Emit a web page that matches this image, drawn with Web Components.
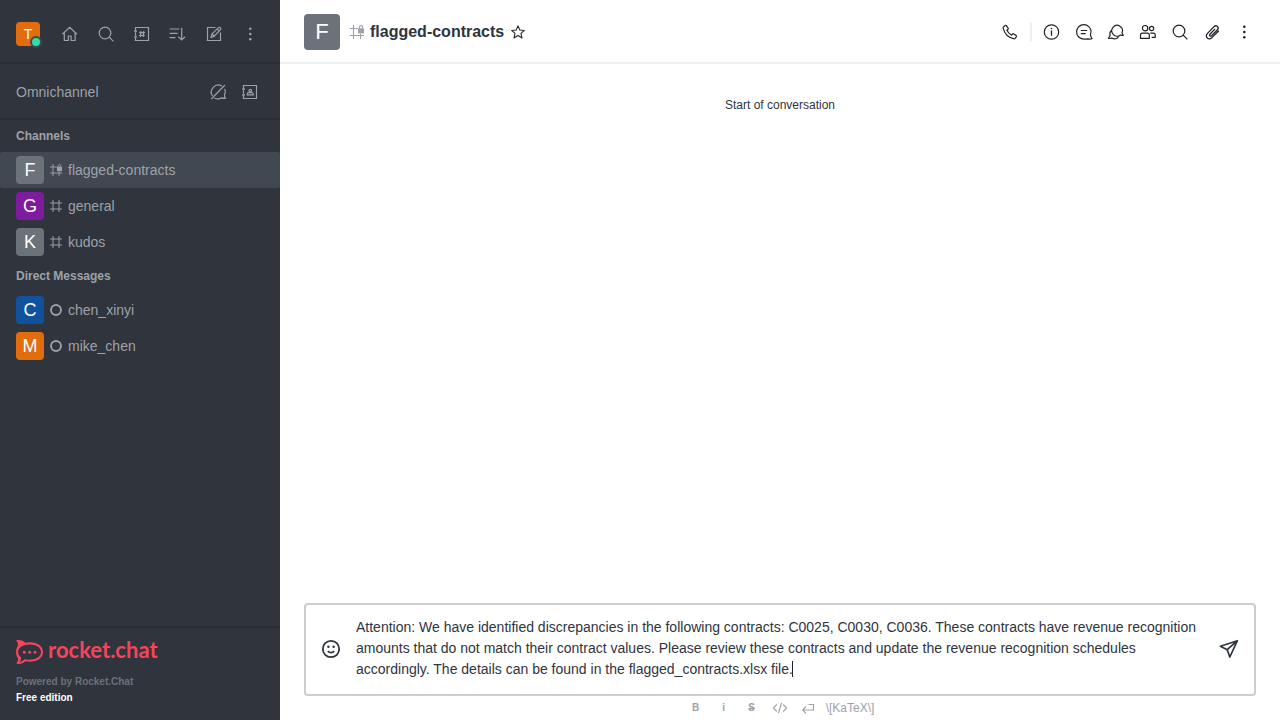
<!DOCTYPE html>
<html lang="en">
<head>
<meta charset="utf-8">
<meta name="viewport" content="width=device-width, initial-scale=1">
<title>flagged-contracts</title>
<style>
  html, body { margin: 0; height: 100%; }
  body { font-family: "Liberation Sans", Arial, sans-serif; color: #2f343d; background: #fff; }
</style>
</head>
<body>
<chat-app></chat-app>
<script>
const ICONS = {
  home: '<path d="M2.400 10.300 9.700 3.400l7.300 6.900M4.300 9v7.500h4V12h2.800v4.500h4V9"/>',
  search: '<circle cx="9" cy="9" r="5.8"/><path d="m13.2 13.2 4.2 4.2"/>',
  directory: '<path d="M3.500 6.500v-3h13v13h-13v-3M3.500 8.300v3.400M2 7.200h3M2 12.800h3M7.200 8.700h5.800M7 11.500h5.800M8.900 7l-.5 6M11.700 7l-.5 6"/>',
  contacts: '<path d="M3.500 6.500v-3h13v13h-13v-3M3.500 8.300v3.400M2 7.200h3M2 12.800h3M7.300 12.800h6v-.6c0-.9-.8-1.5-1.700-1.500H9c-.9 0-1.700.6-1.700 1.500z"/><circle cx="10.300" cy="8.600" r="1.300"/>',
  sort: '<path d="M1.600 5h9.800M1.600 9.300h8M1.600 13.600h5.800M13.700 3.700v12M10.400 12.700l3.300 3.200 3.300-3.200"/>',
  edit: '<path d="M11.500 3.500h-8v13h13v-8"/><path d="m7 13.300.9-3.300 6.500-6.400c1.200-1 3.200.8 2.100 2.100L10 12.400zM8.200 10l1.800 2.100M13.200 4.900l2 2"/>',
  kebab: '<g fill="currentColor" stroke="none"><circle cx="10.300" cy="4.800" r="1.300"/><circle cx="10.300" cy="10" r="1.300"/><circle cx="10.300" cy="15.200" r="1.300"/></g>',
  omni: '<path d="M13.900 4.100A7 7 0 0 0 4.500 14M6.400 15.900c2.500 1.400 5 1.200 7.400 0 1.200.6 2.500.7 3.700.3-.9-.9-1.200-2-1-3.300 1.100-2.200 1-4.300.2-6.200M3.300 17 16.900 3"/>',
  phone: '<path d="M3.600 4.700 5.200 3.600c.6-.4 1-.2 1.400.3l1.500 2.200c.4.6.3 1-.2 1.400l-1 .8c.9 2 2.600 3.700 4.700 4.800l.9-1c.4-.5.9-.6 1.400-.2l2.200 1.600c.5.4.5.8.2 1.300l-1.100 1.500c-.4.5-1 .6-1.700.4C8.400 15.500 4.500 11.500 3.200 6.400c-.2-.7-.1-1.300.4-1.700z"/>',
  info: '<circle cx="9.500" cy="10" r="7.200"/><path d="M9.500 8.400v5.400" stroke-width="1.300"/><circle cx="9.500" cy="6.500" r=".8" fill="currentColor" stroke="none"/>',
  thread: '<path d="M16.400 12.600c1.200-3 .5-6-1.600-8C12 2 7.500 2.100 4.700 4.700 1.900 7.600 1.900 12.200 4.700 15c2.300 2.400 6 2.500 9.300 1.900 1.500.5 2.900.4 4.100-.3-1-1-1.500-2.400-1.700-4zM6.800 8.500h6.400M6.800 11.600h4.800"/>',
  discussion: '<path d="M7.200 12.300a5.300 5.300 0 1 1 8.800-1.500l1.200 2.300c-1.100.5-2 .3-2.700-.1-2.300 1.800-5.400 1.400-7.300-.7zM5.600 8.300c-1.600 1.300-2.100 3.400-1.500 5.300l-1.600 2.600c1.400.5 2.600.3 3.400-.2 2.400 1.500 5.500.9 6.900-1.500"/>',
  members: '<circle cx="7.100" cy="6.200" r="2.700"/><circle cx="13.600" cy="6.500" r="2.100"/><path d="M2.500 16.400v-3.300c0-1.100.8-1.900 1.900-1.900h5c1.100 0 1.900.8 1.900 1.900v3.300zM12.300 11.100h3c1.100 0 1.900.8 1.900 1.900v2.300h-3.500"/>',
  clip: '<path d="M16.800 8.800 10.200 15.400c-3.700 3.400-7.700-.3-4.700-4l6.300-6.500c2.700-2.700 5.900.3 3.500 3.100L9.500 13.700c-1.300 1.200-2.700-.2-1.600-1.500l5.200-5.300" stroke-width="1.300"/>',
  emoji: '<g stroke-width="1.800"><circle cx="10" cy="10" r="8.200"/><path d="M6.800 12.200c1.700 2 4.700 2 6.400 0"/></g><g fill="currentColor" stroke="none"><circle cx="7.400" cy="7.700" r="1.200"/><circle cx="12.600" cy="7.700" r="1.200"/></g>',
  send: '<path d="M1.400 7.300 18.400 1.700 10.800 18 8.200 10.700zM8.200 10.700l9.900-8.800" stroke-width="1.700" stroke-linejoin="round"/>',
  code: '<path d="M6.800 6.300 3.500 10l3.300 3.700M13.200 6.300 16.500 10l-3.300 3.700M11.500 4.800l-3 10.400"/>',
  enter: '<path d="M10.500 6.500H15.500v5.500H5M8 8.700 4.700 12 8 15.300" stroke-width="1.200"/>',
  hash: '<path d="M0 5h20M0 15h20M5 0v20M15 0v20" stroke-width="1.600"/>',
  lock: '<path d="M0 5h11M0 15h20M5 0v20M15 13v7" stroke-width="1.600"/><rect x="11.500" y="4.500" width="8.500" height="7.500" rx="1" fill="currentColor" stroke="none"/><path d="M13.500 5V3c0-2.700 4.500-2.700 4.500 0v2" stroke-width="1.600"/>',
  offline: '<circle cx="10" cy="10" r="8.300" stroke-width="3.200"/>',
  star: '<path d="m10 1.200 2.600 6 6.500.6-4.900 4.300 1.500 6.400-5.700-3.400-5.700 3.400 1.500-6.400L.9 7.800l6.500-.6z" stroke-width="1.500" stroke-linejoin="round"/>'
};

function define(name, markup) {
  customElements.define(name, class extends HTMLElement {
    constructor() {
      super();
      const t = document.createElement('template');
      t.innerHTML = markup;
      this.attachShadow({ mode: 'open' }).append(t.content.cloneNode(true));
    }
  });
}

customElements.define('ui-icon', class extends HTMLElement {
  connectedCallback() {
    if (this.shadowRoot) return;
    this.attachShadow({ mode: 'open' }).innerHTML = `
      <style>:host{display:block;flex:none;width:var(--size,20px);height:var(--size,20px)} svg{display:block;width:100%;height:100%}</style>
      <svg viewBox="0 0 20 20" fill="none" stroke="currentColor" stroke-width="1.2" aria-hidden="true">${ICONS[this.getAttribute('name')]}</svg>`;
  }
});

customElements.define('icon-button', class extends HTMLElement {
  connectedCallback() {
    if (this.shadowRoot) return;
    this.attachShadow({ mode: 'open' }).innerHTML = `
      <style>
        :host{display:block;flex:none}
        button{display:flex;align-items:center;justify-content:center;width:var(--button,28px);height:var(--button,28px);padding:0;border:0;border-radius:4px;background:none;color:inherit;cursor:pointer}
      </style>
      <button type="button" aria-label="${this.getAttribute('label')}"><ui-icon name="${this.getAttribute('icon')}"></ui-icon></button>`;
  }
});

define('user-avatar', `
  <style>
    :host{display:flex;flex:none;align-items:center;justify-content:center;position:relative;width:28px;height:28px;border-radius:4px;background:#6c727a;color:#fff;font-size:18px;line-height:1}
    :host([size=small]){width:24px;height:24px;font-size:14px}
    :host([size=large]){width:36px;height:36px;font-size:22px;line-height:24px}
    :host([tone=orange]){background:#e26d0e}
    :host([tone=purple]){background:#7f1b9f}
    :host([tone=blue]){background:#10529e}
  </style><slot></slot><slot name="badge"></slot>`);

define('presence-dot', `
  <style>:host{position:absolute;right:-2px;bottom:-2px;width:8px;height:8px;border:2px solid #414852;border-radius:50%;background:#2de0a5}</style>`);

customElements.define('room-item', class extends HTMLElement {
  connectedCallback() {
    if (this.shadowRoot) return;
    this.attachShadow({ mode: 'open' }).innerHTML = `
      <style>
        :host{display:block}
        a{display:flex;align-items:center;gap:6px;height:36px;padding:0 16px;color:#9ea2a8;font-size:14px;line-height:20px;text-decoration:none;border-radius:2px}
        :host([selected]) a{background:#414852}
        ui-icon{--size:12px}
      </style>
      <a href="#"><user-avatar tone="${this.getAttribute('tone') || 'grey'}">${this.getAttribute('initial')}</user-avatar><ui-icon name="${this.getAttribute('icon')}"></ui-icon><slot></slot></a>`;
  }
});

define('section-title', `
  <style>:host{display:block} h2{margin:0;padding:0 16px;font-size:12px;line-height:32px;font-weight:700;color:#9ea2a8}</style>
  <h2><slot></slot></h2>`);

define('brand-logo', `
  <style>
    :host{display:flex;align-items:flex-start;gap:5px;height:24px;color:#f5455c}
    svg{flex:none;width:27px;height:24px}
    span{font:700 22px/20px Lato,sans-serif}
  </style>
  <svg viewBox="0 0 27 24" fill="currentColor" aria-hidden="true">
    <path fill-rule="evenodd" d="M0 .4C3.500-.5 7 .5 9.300 2.700 18.500.7 27 4.600 27 12s-8.500 11.200-17.500 9.300C7 23.600 3.500 24.500 0 23.500c2-2 2.400-3.600 1.800-5.500C-.6 14.600-.6 9.400 1.800 6 2.300 4 1.800 2.200 0 .4zM14 4.400C6.700 4.400 2.100 7.700 2.100 12c0 2.200 1.200 4 3 5.200.1 1.600-.2 3.100-1.100 4.700 1.800-.3 3.200-1.200 4.200-2.600 8.900 1.700 16.800-1.600 16.800-7.300 0-4.500-4.800-7.600-11-7.600z"/>
    <circle cx="8.300" cy="12.200" r="1.500"/><circle cx="13.700" cy="12.200" r="1.500"/><circle cx="19" cy="12.200" r="1.500"/>
  </svg><span>rocket.chat</span>`);

define('side-bar', `
  <style>
    :host{display:flex;flex-direction:column;flex:none;width:280px;background:#2f343d;color:#9ea2a8}
    header,.omni{display:flex;align-items:center;box-sizing:border-box;padding:0 16px;border-bottom:2px solid #292d35}
    header{height:64px;gap:8px;padding-top:6px}
    header user-avatar{margin-right:auto}
    .omni{height:56px;gap:4px;padding-top:2px}
    .omni span{margin-right:auto;font-size:14px;line-height:20px}
    nav{flex:1;min-height:0;overflow:hidden}
    footer{padding:12px 16px 14px;border-top:2px solid #292d35;font-size:10px;line-height:16px;font-weight:700}
    footer p{margin:0;color:#6c727a}
    footer p:first-of-type{margin-top:10px}
    footer .plan{color:#fff}
  </style>
  <header>
    <user-avatar size="small" tone="orange">T<presence-dot slot="badge"></presence-dot></user-avatar>
    <icon-button icon="home" label="Home"></icon-button>
    <icon-button icon="search" label="Search"></icon-button>
    <icon-button icon="directory" label="Directory"></icon-button>
    <icon-button icon="sort" label="Display"></icon-button>
    <icon-button icon="edit" label="Create new"></icon-button>
    <icon-button icon="kebab" label="More"></icon-button>
  </header>
  <div class="omni"><span>Omnichannel</span>
    <icon-button icon="omni" label="Turn on answer chats"></icon-button>
    <icon-button icon="contacts" label="Contact center"></icon-button>
  </div>
  <nav>
    <section-title>Channels</section-title>
    <room-item selected initial="F" icon="lock">flagged-contracts</room-item>
    <room-item initial="G" tone="purple" icon="hash">general</room-item>
    <room-item initial="K" icon="hash">kudos</room-item>
    <section-title>Direct Messages</section-title>
    <room-item initial="C" tone="blue" icon="offline">chen_xinyi</room-item>
    <room-item initial="M" tone="orange" icon="offline">mike_chen</room-item>
  </nav>
  <footer>
    <brand-logo></brand-logo>
    <p>Powered by Rocket.Chat</p>
    <p class="plan">Free edition</p>
  </footer>`);

define('room-header', `
  <style>
    :host{display:flex;align-items:center;box-sizing:border-box;height:64px;padding:2px 22px 0 24px;border-bottom:2px solid #eeeff1;color:#1f2329}
    .hash{--size:14px;margin:0 6px 0 10px;color:#9ea2a8}
    h1{margin:0;font-size:16px;line-height:24px;color:#2f343d}
    .star{--size:14px}
    .tools{display:flex;align-items:center;gap:4px;margin-left:auto}
    .rule{width:2px;height:20px;margin:0 2px;background:#eeeff1}
  </style>
  <user-avatar size="large">F</user-avatar>
  <ui-icon class="hash" name="lock"></ui-icon>
  <h1>flagged-contracts</h1>
  <icon-button class="star" icon="star" label="Favorite"></icon-button>
  <div class="tools">
    <icon-button icon="phone" label="Call"></icon-button>
    <span class="rule"></span>
    <icon-button icon="info" label="Room information"></icon-button>
    <icon-button icon="thread" label="Threads"></icon-button>
    <icon-button icon="discussion" label="Discussion"></icon-button>
    <icon-button icon="members" label="Members"></icon-button>
    <icon-button icon="search" label="Search messages"></icon-button>
    <icon-button icon="clip" label="Files"></icon-button>
    <icon-button icon="kebab" label="Options"></icon-button>
  </div>`);

define('message-composer', `
  <style>
    :host{display:block;padding:0 24px}
    .box{display:flex;align-items:center;gap:12px;padding:12px 12px 14px;border:2px solid #cbced1;border-radius:4px;--button:26px}
    .field{position:relative;flex:1;min-width:0}
    textarea{display:block;box-sizing:border-box;width:100%;height:63px;padding:0;border:0;outline:0;resize:none;overflow:hidden;background:none;color:#2f343d;font:14px/21px "Liberation Sans",Arial,sans-serif}
    .caret{position:absolute;left:436px;top:44px;width:1px;height:16px;background:#1f2329}
    .tools{display:flex;justify-content:center;align-items:center;gap:8px;height:24px;color:#9ea2a8;--button:20px}
    .tools button{width:20px;padding:0;border:0;background:none;color:inherit;font:700 10px/20px "Liberation Sans",Arial,sans-serif}
    .tools .strike{text-decoration:line-through}
    .tools a{font-size:12px;line-height:20px;color:inherit;text-decoration:none}
  </style>
  <div class="box">
    <icon-button icon="emoji" label="Emoji"></icon-button>
    <div class="field"><textarea aria-label="Message" spellcheck="false">Attention: We have identified discrepancies in the following contracts: C0025, C0030, C0036. These contracts have revenue recognition amounts that do not match their contract values. Please review these contracts and update the revenue recognition schedules accordingly. The details can be found in the flagged_contracts.xlsx file.</textarea><span class="caret"></span></div>
    <icon-button icon="send" label="Send"></icon-button>
  </div>
  <div class="tools">
    <button type="button" aria-label="Bold">B</button>
    <button type="button" aria-label="Italic">i</button>
    <button type="button" class="strike" aria-label="Strike">S</button>
    <icon-button icon="code" label="Code"></icon-button>
    <icon-button icon="enter" label="Multi line"></icon-button>
    <a href="#">\\[KaTeX\\]</a>
  </div>`);

define('chat-app', `
  <style>
    :host{display:flex;height:100vh;overflow:hidden}
    main{display:flex;flex-direction:column;flex:1;min-width:0;background:#fff}
    .log{flex:1;min-height:0;padding-top:32px;text-align:center;font-size:12px;line-height:18px}
  </style>
  <side-bar></side-bar>
  <main>
    <room-header></room-header>
    <div class="log">Start of conversation</div>
    <message-composer></message-composer>
  </main>`);
</script>
</body>
</html>
